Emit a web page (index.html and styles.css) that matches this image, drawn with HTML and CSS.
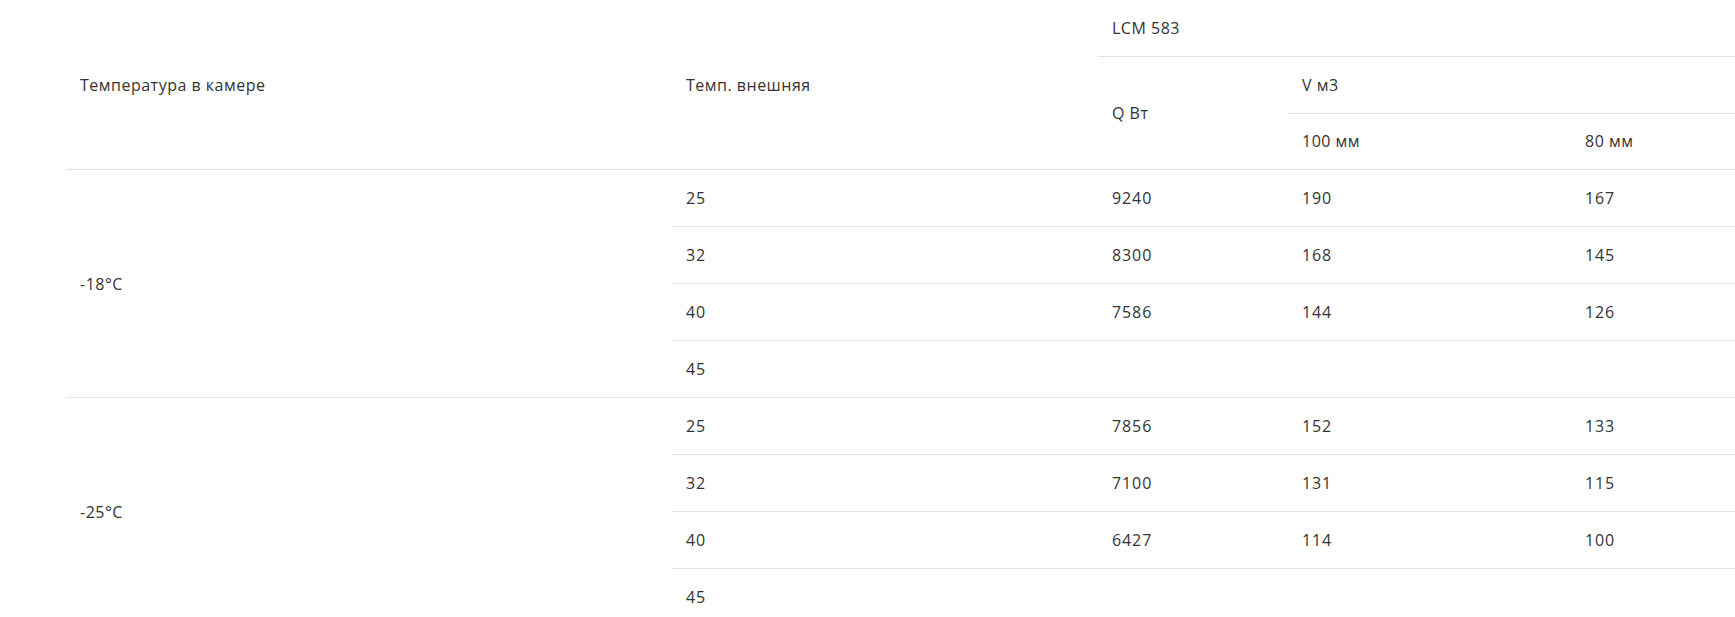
FILE: index.html
```html
<!DOCTYPE html>
<html lang="ru">
<head>
<meta charset="utf-8">
<title>LCM 583</title>
<link rel="stylesheet" href="styles.css">
</head>
<body>
<div class="wrap">
<table class="spec">
  <colgroup>
    <col class="c1"><col class="c2"><col class="c3"><col class="c4"><col class="c5">
  </colgroup>
  <thead>
    <tr>
      <th rowspan="3">Температура в камере</th>
      <th rowspan="3">Темп. внешняя</th>
      <th colspan="3">LCM 583</th>
    </tr>
    <tr>
      <th rowspan="2">Q Вт</th>
      <th colspan="2">V м3</th>
    </tr>
    <tr>
      <th>100 мм</th>
      <th>80 мм</th>
    </tr>
  </thead>
  <tbody>
    <tr><td rowspan="4">-18°C</td><td class="n">25</td><td class="n">9240</td><td class="n">190</td><td class="n">167</td></tr>
    <tr><td class="n">32</td><td class="n">8300</td><td class="n">168</td><td class="n">145</td></tr>
    <tr><td class="n">40</td><td class="n">7586</td><td class="n">144</td><td class="n">126</td></tr>
    <tr><td class="n">45</td><td></td><td></td><td></td></tr>
    <tr><td rowspan="4">-25°C</td><td class="n">25</td><td class="n">7856</td><td class="n">152</td><td class="n">133</td></tr>
    <tr><td class="n">32</td><td class="n">7100</td><td class="n">131</td><td class="n">115</td></tr>
    <tr><td class="n">40</td><td class="n">6427</td><td class="n">114</td><td class="n">100</td></tr>
    <tr><td class="n">45</td><td></td><td></td><td></td></tr>
  </tbody>
</table>
</div>
</body>
</html>
```

FILE: styles.css
```css
html, body {
  margin: 0;
  padding: 0;
  background: #fff;
}
.wrap {
  padding-left: 66px;
  overflow: hidden;
}
.spec {
  border-collapse: collapse;
  table-layout: fixed;
  width: 1788px;
  font-family: "Open Sans", "Liberation Sans", sans-serif;
  font-size: 16px;
  letter-spacing: 0.5px;
  color: #333;
}
.c1 { width: 606px; }
.c2 { width: 426px; }
.c3 { width: 190px; }
.c4 { width: 283px; }
.c5 { width: 283px; }
.spec th, .spec td {
  text-align: left;
  font-weight: 400;
  padding: 17px 14px;
  line-height: 22px;
  vertical-align: middle;
  border-bottom: 1px solid #e4e4e4;
}
.spec thead th {
  padding-top: 16.9px;
  padding-bottom: 16.9px;
}
.spec td.n {
  letter-spacing: 0.9px;
}
```
